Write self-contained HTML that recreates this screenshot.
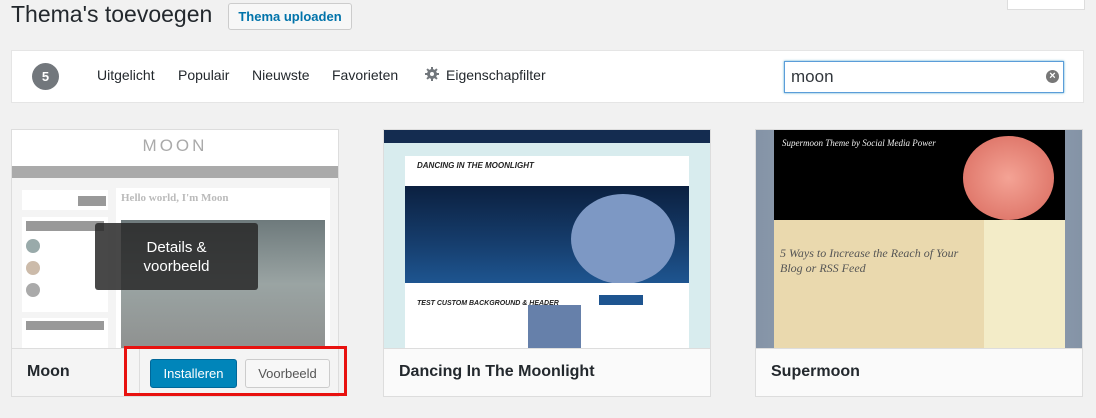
<!DOCTYPE html>
<html><head><meta charset="utf-8"><style>
*{box-sizing:border-box;margin:0;padding:0}
body{width:1096px;height:418px;background:#f1f1f1;font-family:"Liberation Sans",sans-serif;position:relative;overflow:hidden;color:#23282d}
.abs{position:absolute}
h1{position:absolute;left:11px;top:1px;font-size:23px;font-weight:400;color:#23282d}
.btn{position:absolute;border:1px solid #ccc;background:#f7f7f7;border-radius:3px;font-size:13px;font-weight:600;color:#0073aa;text-align:center}
.bar{left:11px;top:50px;width:1073px;height:53px;background:#fff;border:1px solid #e5e5e5}
.count{left:32px;top:63px;width:27px;height:27px;border-radius:50%;background:#72777c;color:#fff;font-weight:700;font-size:13px;text-align:center;line-height:27px}
.nav{top:67px;font-size:14px;color:#23282d}
.search{left:784px;top:61px;width:280px;height:32px;border:1px solid #5b9dd9;box-shadow:0 0 2px rgba(30,140,190,.8);background:#fff;font-size:17px;padding:5px 6px;color:#32373c}
.card{top:129px;width:328px;height:268px;border:1px solid #ddd;background:#fff;overflow:hidden}
.shot{position:absolute;left:0;top:0;width:326px;height:218px;overflow:hidden}
.foot{position:absolute;left:0;top:218px;width:326px;height:49px;background:#fafafa;border-top:1px solid #ddd;font-size:16px;font-weight:700;padding:14px 15px;color:#23282d}
</style></head><body>
<h1>Thema's toevoegen</h1>
<div class="btn" style="left:228px;top:3px;width:124px;height:27px;line-height:25px">Thema uploaden</div>
<div class="abs" style="left:1007px;top:-2px;width:78px;height:12px;background:#fff;border:1px solid #ddd;border-top:0"></div>
<div class="abs bar"></div>
<div class="abs count">5</div>
<div class="abs nav" style="left:97px">Uitgelicht</div>
<div class="abs nav" style="left:178px">Populair</div>
<div class="abs nav" style="left:252px">Nieuwste</div>
<div class="abs nav" style="left:332px">Favorieten</div>
<svg class="abs" style="left:425px;top:67px" width="14" height="14" viewBox="0 0 14 14"><g fill="#72777c"><circle cx="7" cy="7" r="5"/><rect x="6" y="0" width="2" height="14"/><rect x="0" y="6" width="14" height="2"/><rect x="6" y="0" width="2" height="14" transform="rotate(45 7 7)"/><rect x="6" y="0" width="2" height="14" transform="rotate(-45 7 7)"/></g><circle cx="7" cy="7" r="2" fill="#fff"/></svg>
<div class="abs nav" style="left:446px">Eigenschapfilter</div>
<div class="abs search">moon</div>
<div class="abs" style="left:1046px;top:70px;width:13px;height:13px;border-radius:50%;background:#777;color:#fff;font-size:11px;line-height:13px;text-align:center;font-weight:700">×</div>

<!-- card 1 -->
<div class="abs card" style="left:11px">
 <div class="shot" style="background:#f4f4f4">
  <div class="abs" style="left:0;top:0;width:326px;height:36px;background:#fff;text-align:center;font-size:17px;letter-spacing:3px;color:#aaa;padding-top:6px">MOON</div>
  <div class="abs" style="left:0;top:36px;width:326px;height:12px;background:#aaa"></div>
  <div class="abs" style="left:10px;top:60px;width:86px;height:20px;background:#fff"></div>
  <div class="abs" style="left:66px;top:66px;width:28px;height:10px;background:#999"></div>
  <div class="abs" style="left:10px;top:87px;width:86px;height:95px;background:#fff"></div>
  <div class="abs" style="left:14px;top:91px;width:78px;height:10px;background:#999"></div>
  <div class="abs" style="left:14px;top:109px;width:14px;height:14px;border-radius:50%;background:#9aa"></div>
  <div class="abs" style="left:14px;top:131px;width:14px;height:14px;border-radius:50%;background:#cba"></div>
  <div class="abs" style="left:14px;top:153px;width:14px;height:14px;border-radius:50%;background:#aaa"></div>
  <div class="abs" style="left:10px;top:188px;width:86px;height:30px;background:#fff"></div>
  <div class="abs" style="left:14px;top:191px;width:78px;height:9px;background:#999"></div>
  <div class="abs" style="left:104px;top:58px;width:214px;height:160px;background:#fff"></div>
  <div class="abs" style="left:109px;top:62px;font:bold 11px 'Liberation Serif',serif;color:#bbb">Hello world, I'm Moon</div>
  <div class="abs" style="left:109px;top:90px;width:204px;height:128px;background:linear-gradient(180deg,#6e7a7c,#9aa4a3 50%,#8f9190)"></div>
  <div class="abs" style="left:83px;top:93px;width:163px;height:67px;background:rgba(40,40,40,.85);border-radius:3px;color:#fff;font-size:15px;text-align:center;padding-top:15px;line-height:19px">Details &amp;<br>voorbeeld</div>
 </div>
 <div class="foot" style="background:#f4f4f4">Moon</div>
 <div class="abs" style="left:127px;top:218px;width:1px;height:49px;background:#ddd"></div>
 <div class="abs" style="left:138px;top:229px;width:87px;height:29px;background:#0085ba;border:1px solid #006799;border-radius:3px;color:#fff;font-size:13px;text-align:center;line-height:27px">Installeren</div>
 <div class="abs" style="left:233px;top:229px;width:85px;height:29px;background:#f7f7f7;border:1px solid #ccc;border-radius:3px;color:#555;font-size:13px;text-align:center;line-height:27px">Voorbeeld</div>
</div>
<div class="abs" style="left:124px;top:346px;width:223px;height:50px;border:3px solid #e8110f"></div>

<!-- card 2 -->
<div class="abs card" style="left:383px">
 <div class="shot" style="background:#d8ecee">
  <div class="abs" style="left:0;top:0;width:326px;height:13px;background:#142c50"></div>
  <div class="abs" style="left:21px;top:26px;width:284px;height:30px;background:#fff"></div>
  <div class="abs" style="left:33px;top:31px;font:italic bold 8px 'Liberation Sans';color:#222">DANCING IN THE MOONLIGHT</div>
  <div class="abs" style="left:21px;top:56px;width:284px;height:97px;background:linear-gradient(180deg,#0b2040,#163e6e 60%,#1e5590)"></div>
  <div class="abs" style="left:187px;top:64px;width:104px;height:90px;border-radius:50%;background:#7d98c4"></div>
  <div class="abs" style="left:21px;top:153px;width:284px;height:65px;background:#fff"></div>
  <div class="abs" style="left:144px;top:175px;width:53px;height:43px;background:#6680aa"></div>
  <div class="abs" style="left:215px;top:165px;width:44px;height:10px;background:#1e5590"></div>
  <div class="abs" style="left:33px;top:170px;font:italic bold 7px 'Liberation Sans';color:#222">TEST CUSTOM BACKGROUND &amp; HEADER</div>
 </div>
 <div class="foot">Dancing In The Moonlight</div>
</div>

<!-- card 3 -->
<div class="abs card" style="left:755px">
 <div class="shot" style="background:linear-gradient(90deg,#8493a6,#a7b5c4 50%,#8493a6)">
  <div class="abs" style="left:18px;top:0;width:291px;height:90px;background:#000"></div>
  <div class="abs" style="left:207px;top:6px;width:91px;height:84px;border-radius:50%;background:radial-gradient(#f4a395,#d8685c)"></div>
  <div class="abs" style="left:26px;top:8px;font:italic 9px 'Liberation Serif';color:#eee">Supermoon Theme by Social Media Power</div>
  <div class="abs" style="left:18px;top:90px;width:210px;height:128px;background:#ead9ae"></div>
  <div class="abs" style="left:228px;top:90px;width:81px;height:128px;background:#f3ecc8"></div>
  <div class="abs" style="left:24px;top:116px;font:italic 12px 'Liberation Serif';color:#555;width:200px">5 Ways to Increase the Reach of Your Blog or RSS Feed</div>
 </div>
 <div class="foot">Supermoon</div>
</div>
</body></html>
